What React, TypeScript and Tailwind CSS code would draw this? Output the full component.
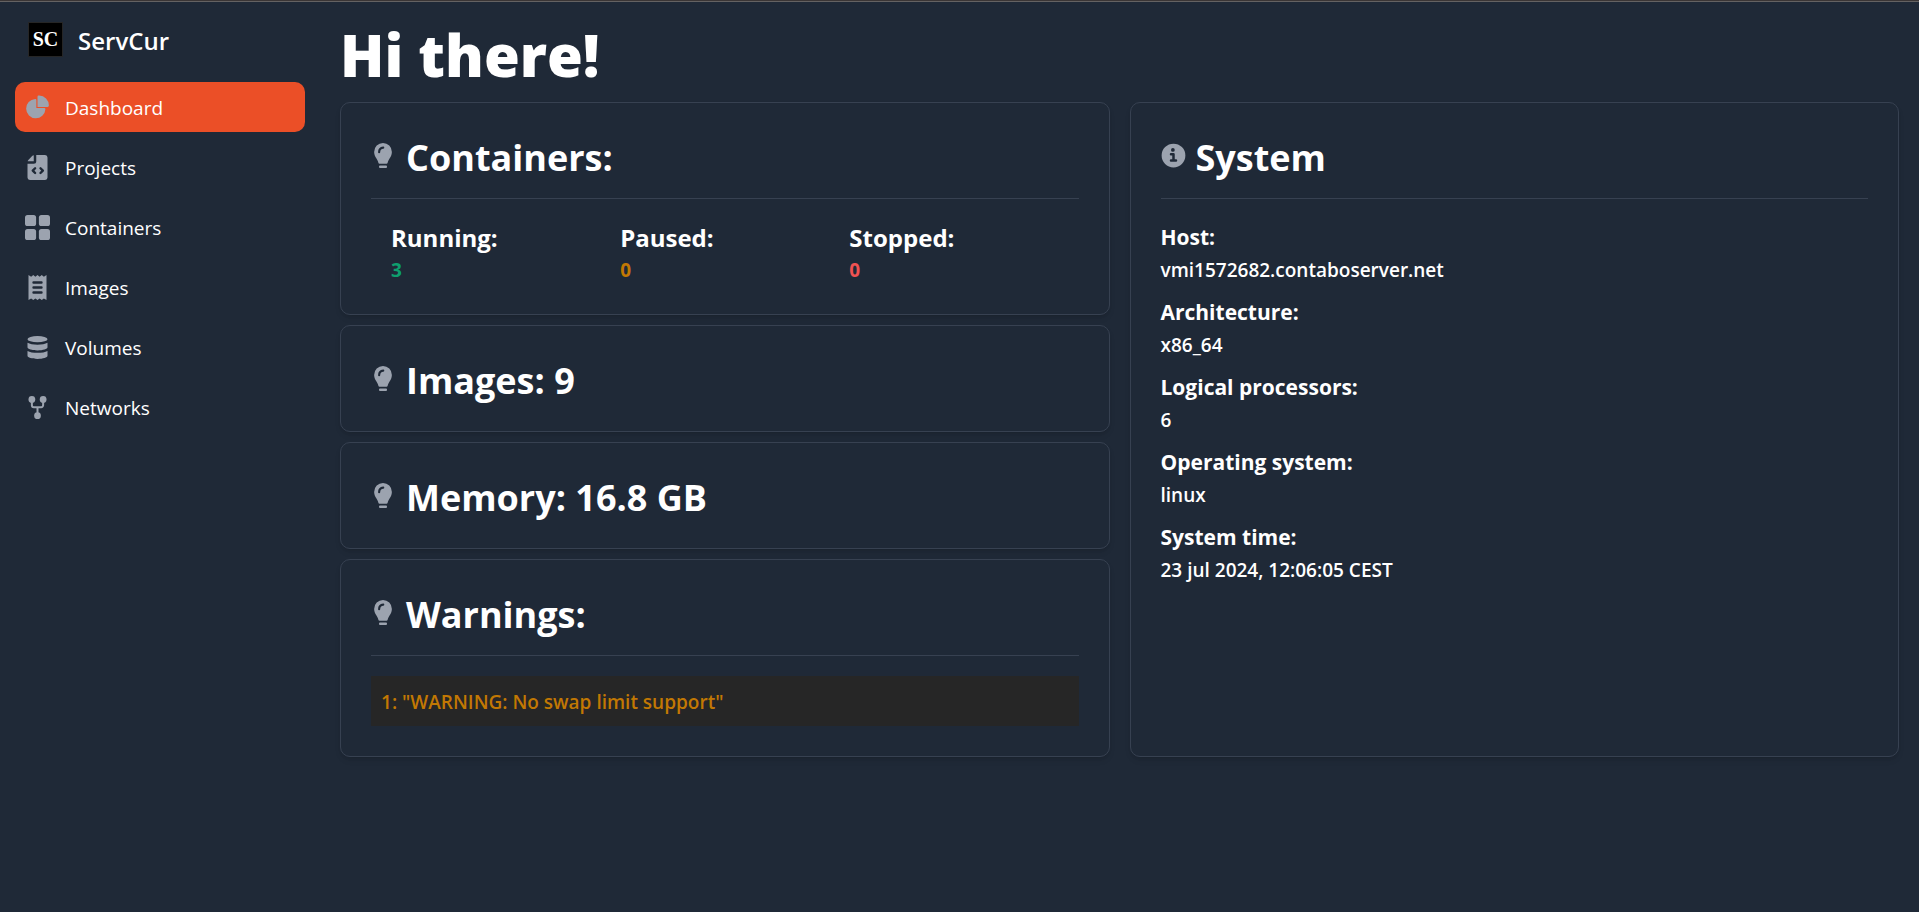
import type { ReactNode } from "react";

type IconProps = { children: ReactNode; viewBox?: string };

function Icon({ children, viewBox = "0 0 20 20" }: IconProps) {
  return (
    <svg
      className="size-[25px] shrink-0 text-[#9ca3af]"
      fill="currentColor"
      viewBox={viewBox}
      aria-hidden="true"
    >
      {children}
    </svg>
  );
}

const PieIcon = () => (
  <Icon viewBox="0 0 22 21">
    <path d="M16.975 11H10V4.025a1 1 0 0 0-1.066-.998 8.5 8.5 0 1 0 9.039 9.039.999.999 0 0 0-1-1.066h.002Z" />
    <path d="M12.5 0c-.157 0-.311.01-.565.027A1 1 0 0 0 11 1.02V10h8.975a1 1 0 0 0 1-.935c.013-.188.028-.374.028-.565A8.51 8.51 0 0 0 12.5 0Z" />
  </Icon>
);

const FileCodeIcon = () => (
  <Icon viewBox="0 0 16 20">
    <path d="M5 5V.13a2.96 2.96 0 0 0-1.293.749L.879 3.707A2.98 2.98 0 0 0 .13 5H5Z" />
    <path d="M14.066 0H7v5a2 2 0 0 1-2 2H0v11a1.97 1.97 0 0 0 1.934 2h12.132A1.97 1.97 0 0 0 16 18V2a1.97 1.97 0 0 0-1.934-2Z" />
    <path
      d="M6.1 10.6 4.2 12.5l1.9 1.9M10.4 10.6l1.9 1.9-1.9 1.9"
      className="fill-none stroke-[#1f2937]"
      strokeWidth="1.9"
      strokeLinecap="round"
      strokeLinejoin="round"
    />
  </Icon>
);

const GridIcon = () => (
  <Icon viewBox="0 0 18 18">
    <rect width="8" height="8" rx="1.857" />
    <rect x="10" width="8" height="8" rx="1.857" />
    <rect y="10" width="8" height="8" rx="1.857" />
    <rect x="10" y="10" width="8" height="8" rx="1.857" />
  </Icon>
);

const ReceiptIcon = () => (
  <Icon viewBox="0 0 16 20">
    <path d="M.8 0 2.9 1.3 4.6 0l1.7 1.3L8 0l1.7 1.3L11.4 0l1.7 1.3L15.2 0v20l-2.1-1.3-1.7 1.3-1.7-1.3L8 20l-1.7-1.3L4.6 20l-1.7-1.3L.8 20Z" />
    <path
      d="M4.8 6h6.4M4.8 10h6.4M4.8 14h6.4"
      className="stroke-[#1f2937]"
      strokeWidth="1.9"
      strokeLinecap="round"
    />
  </Icon>
);

const DatabaseIcon = () => (
  <Icon viewBox="0 0 16 20">
    <ellipse cx="8" cy="3.3" rx="8" ry="2.5" />
    <path d="M0 6.2c1.7 1 4.6 1.5 8 1.5s6.3-.5 8-1.5v3.600c0 1.400-3.600 2.500-8 2.500s-8-1.100-8-2.500Z" />
    <path d="M0 12.700c1.700 1 4.600 1.500 8 1.500s6.300-.5 8-1.500v3.900c0 1.400-3.600 2.500-8 2.500s-8-1.100-8-2.500Z" />
  </Icon>
);

const ForkIcon = () => (
  <Icon viewBox="0 0 16 20">
    <circle cx="3.500" cy="3.500" r="2.700" />
    <circle cx="12.500" cy="3.500" r="2.700" />
    <circle cx="8" cy="16.500" r="2.700" />
    <path
      d="M3.500 4v4.200a1.500 1.500 0 0 0 1.500 1.500h6a1.500 1.500 0 0 0 1.500-1.500V4M8 9.700V16"
      fill="none"
      stroke="currentColor"
      strokeWidth="1.600"
    />
  </Icon>
);

const BulbIcon = () => (
  <Icon viewBox="0.4 0 20 20">
    <path d="M10 0a7.100 7.100 0 0 0-7.100 7.100c0 2.400 1.100 4 2.100 5.600.7 1.100 1.100 2 1.300 3.100.1.500.4.800.9.800h5.600c.5 0 .8-.3.9-.8.2-1.100.6-2 1.300-3.100 1-1.600 2.100-3.200 2.100-5.600A7.100 7.100 0 0 0 10 0Z" />
    <rect x="6.800" y="17.900" width="6.400" height="2" rx=".8" />
    <path
      d="M6.900 7.300c0-2 1.300-3.400 3.300-3.600"
      className="fill-none stroke-[#1f2937]"
      strokeWidth="1.700"
      strokeLinecap="round"
    />
  </Icon>
);

const InfoIcon = () => (
  <Icon>
    <path d="M10 .5a9.500 9.500 0 1 0 9.500 9.500A9.510 9.510 0 0 0 10 .5ZM9.500 4a1.500 1.500 0 1 1 0 3 1.500 1.500 0 0 1 0-3ZM12 15H8a1 1 0 0 1 0-2h1v-3H8a1 1 0 0 1 0-2h2a1 1 0 0 1 1 1v4h1a1 1 0 0 1 0 2Z" />
  </Icon>
);

const navItems = [
  { label: "Dashboard", icon: <PieIcon />, active: true },
  { label: "Projects", icon: <FileCodeIcon /> },
  { label: "Containers", icon: <GridIcon /> },
  { label: "Images", icon: <ReceiptIcon /> },
  { label: "Volumes", icon: <DatabaseIcon /> },
  { label: "Networks", icon: <ForkIcon /> },
];

const containerStats = [
  { label: "Running:", value: 3, tone: "text-[#0e9f6e]" },
  { label: "Paused:", value: 0, tone: "text-[#c27803]" },
  { label: "Stopped:", value: 0, tone: "text-[#f05252]" },
];

const systemInfo = [
  { label: "Host:", value: "vmi1572682.contaboserver.net" },
  { label: "Architecture:", value: "x86_64" },
  { label: "Logical processors:", value: "6" },
  { label: "Operating system:", value: "linux" },
  { label: "System time:", value: "23 jul 2024, 12:06:05 CEST" },
];

const warnings = ["WARNING: No swap limit support"];

type CardProps = { title: string; icon?: ReactNode; children?: ReactNode };

function Card({ title, icon = <BulbIcon />, children }: CardProps) {
  return (
    <section className="rounded-[10px] border border-[#374151] p-[30px] shadow-md">
      <div className="flex items-center gap-2.5">
        {icon}
        <h2 className="pt-1 text-4xl leading-[41px] font-bold">{title}</h2>
      </div>
      {children && (
        <div className="mt-5 border-t border-[#374151] pt-5">{children}</div>
      )}
    </section>
  );
}

function Sidebar() {
  return (
    <aside className="w-80 shrink-0 px-[15px] py-5">
      <a href="#" className="mb-[25px] flex items-center gap-[15px] pl-[13px]">
        <span className="flex size-[35px] items-center justify-center border border-neutral-800 bg-black pb-0.5 font-['Liberation_Serif',serif] text-xl font-bold">
          SC
        </span>
        <span className="pt-0.5 text-2xl leading-[33px] font-semibold">
          ServCur
        </span>
      </a>
      <nav>
        <ul className="flex flex-col gap-2.5">
          {navItems.map(({ label, icon, active }) => (
            <li key={label}>
              <a
                href="#"
                aria-current={active ? "page" : undefined}
                className={
                  active
                    ? "flex items-center gap-[15px] rounded-[10px] bg-[#eb4f27] p-2.5"
                    : "flex items-center gap-[15px] rounded-[10px] p-2.5"
                }
              >
                {icon}
                <span className="pt-0.5">{label}</span>
              </a>
            </li>
          ))}
        </ul>
      </nav>
    </aside>
  );
}

export default function App() {
  return (
    <div className="flex min-h-screen flex-col border-t border-[#3a3535] bg-[#1f2937] font-['Open_Sans',sans-serif] text-[19px] leading-7 text-white">
      <div className="flex flex-1 border-t border-[#646262]">
        <Sidebar />
        <main className="min-w-0 flex-1 p-5">
          <h1 className="mb-5 pt-1.5 text-[58px] leading-[54px] font-extrabold">
            Hi there!
          </h1>
          <div className="grid grid-cols-2 gap-5">
            <div className="flex flex-col gap-2.5">
              <Card title="Containers:">
                <dl className="grid grid-cols-3 gap-5 px-5">
                  {containerStats.map(({ label, value, tone }) => (
                    <div key={label}>
                      <dt className="pt-0.5 text-2xl leading-[33px] font-bold">
                        {label}
                      </dt>
                      <dd className={`pt-0.5 font-bold ${tone}`}>{value}</dd>
                    </div>
                  ))}
                </dl>
              </Card>
              <Card title="Images: 9" />
              <Card title="Memory: 16.8 GB" />
              <Card title="Warnings:">
                <ul>
                  {warnings.map((warning, index) => (
                    <li
                      key={warning}
                      className="bg-[#262626] px-2.5 pt-3 pb-2.5 font-semibold text-[#c27803]"
                    >
                      {index + 1}: "{warning}"
                    </li>
                  ))}
                </ul>
              </Card>
            </div>
            <Card title="System" icon={<InfoIcon />}>
              <dl className="flex flex-col gap-2.5">
                {systemInfo.map(({ label, value }) => (
                  <div key={label}>
                    <dt className="pt-0.5 text-[21px] leading-[33px] font-bold">
                      {label}
                    </dt>
                    <dd className="pt-0.5 font-semibold">{value}</dd>
                  </div>
                ))}
              </dl>
            </Card>
          </div>
        </main>
      </div>
    </div>
  );
}
